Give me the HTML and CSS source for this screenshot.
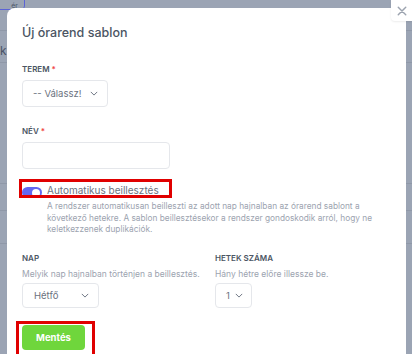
FILE: index.html
```html
<!DOCTYPE html>
<html lang="hu">
<head>
    <meta charset="UTF-8">
    <meta name="viewport" content="width=device-width, initial-scale=1.0">
    <title>Új órarend sablon</title>
    <link rel="stylesheet" href="styles.css">
</head>
<body>
    <div class="backdrop">
        <div class="page-chip">ér</div>
        <div class="page-row row-1"><span class="page-text">k</span></div>
        <div class="page-row row-2"></div>
        <div class="page-row row-3"></div>
        <div class="page-row row-4"></div>
        <div class="page-row row-5"></div>
    </div>

    <div class="modal">
        <h2 class="modal-title">Új órarend sablon</h2>

        <div class="field">
            <label class="field-label">Terem <span class="req">*</span></label>
            <div class="select select-room">
                <span>-- Válassz!</span>
                <svg class="chevron" viewBox="0 0 10 6" width="8" height="5"><path d="M1 1l4 4 4-4" fill="none" stroke="#6b7280" stroke-width="1.2"/></svg>
            </div>
        </div>

        <div class="field">
            <label class="field-label">Név <span class="req">*</span></label>
            <div class="input"></div>
        </div>

        <div class="switch-row">
            <span class="switch"><span class="knob"></span></span>
            <div class="switch-text">
                <div class="switch-label">Automatikus beillesztés</div>
                <p class="switch-help">A rendszer automatikusan beilleszti az adott nap hajnalban az órarend sablont a következő hetekre. A sablon beillesztésekor a rendszer gondoskodik arról, hogy ne keletkezzenek duplikációk.</p>
            </div>
        </div>

        <div class="columns">
            <div class="field">
                <label class="field-label">Nap</label>
                <p class="help">Melyik nap hajnalban történjen a beillesztés.</p>
                <div class="select select-day">
                    <span>Hétfő</span>
                    <svg class="chevron" viewBox="0 0 10 6" width="8" height="5"><path d="M1 1l4 4 4-4" fill="none" stroke="#6b7280" stroke-width="1.2"/></svg>
                </div>
            </div>
            <div class="field">
                <label class="field-label">Hetek száma</label>
                <p class="help">Hány hétre előre illessze be.</p>
                <div class="select select-weeks">
                    <span>1</span>
                    <svg class="chevron" viewBox="0 0 10 6" width="8" height="5"><path d="M1 1l4 4 4-4" fill="none" stroke="#6b7280" stroke-width="1.2"/></svg>
                </div>
            </div>
        </div>

        <button class="save-button" type="button">Mentés</button>

        <div class="mark mark-switch"></div>
        <div class="mark mark-save"></div>
    </div>

    <button class="close-button" type="button" aria-label="Bezárás">
        <svg viewBox="0 0 12 12" width="10" height="10"><path d="M1.5 1.5l9 9M10.5 1.5l-9 9" stroke="#9ca3af" stroke-width="1.7" stroke-linecap="round"/></svg>
    </button>
</body>
</html>
```

FILE: styles.css
```css
* {
    box-sizing: border-box;
}
body {
    margin: 0;
    height: 354px;
    overflow: hidden;
    font-family: 'Inter', 'Liberation Sans', sans-serif;
    background-color: #9ba4b4;
    position: relative;
}
.backdrop {
    padding-top: 30px;
}
.page-chip {
    position: absolute;
    top: -9px;
    left: -30px;
    width: 55px;
    height: 19px;
    border: 1px solid #5b63d6;
    border-radius: 4px;
    font-size: 7px;
    line-height: 7px;
    color: #4a5366;
    text-align: right;
    padding: 10px 6px 0 0;
}
.page-row {
    border-top: 1px solid #8f98a8;
}
.row-1 {
    height: 32px;
}
.page-text {
    display: block;
    padding: 12px 0 0 0;
    font-size: 12px;
    color: #4a5366;
}
.row-2 {
    height: 121px;
}
.row-3 {
    height: 27px;
}
.row-4 {
    height: 33px;
}
.row-5 {
    height: 80px;
}

.modal {
    position: absolute;
    top: 8px;
    left: 7px;
    width: 399px;
    height: 360px;
    background-color: #fff;
    border-radius: 8px 0 0 0;
    padding: 17px 15px;
}
.modal-title {
    margin: 0 0 23px;
    font-size: 12.5px;
    line-height: 16px;
    font-weight: 500;
    color: #4b5563;
}
.field {
    margin-bottom: 19px;
}
.field-label {
    display: block;
    font-size: 8px;
    line-height: 10px;
    font-weight: 600;
    text-transform: uppercase;
    color: #4b5563;
    margin-bottom: 6px;
}
.req {
    color: #ef4444;
}
.select {
    display: flex;
    align-items: center;
    justify-content: space-between;
    height: 27px;
    border: 1px solid #e5e7eb;
    border-radius: 4px;
    padding: 0 9px 0 10px;
    font-size: 9.5px;
    color: #6b7280;
}
.select-room {
    width: 86px;
}
.input {
    width: 148px;
    height: 27px;
    border: 1px solid #e5e7eb;
    border-radius: 4px;
}
.switch-row {
    display: flex;
    gap: 5px;
    margin-top: -5px;
}
.switch {
    flex: none;
    width: 20px;
    height: 11px;
    margin-top: 4px;
    border-radius: 6px;
    background-color: #6366f1;
    position: relative;
}
.knob {
    position: absolute;
    top: 1.5px;
    right: 2px;
    width: 8px;
    height: 8px;
    border-radius: 50%;
    background-color: #fff;
}
.switch-label {
    font-size: 10px;
    color: #6b7280;
    line-height: 14px;
}
.switch-help {
    margin: 4px 0 0;
    font-size: 8.3px;
    line-height: 11.5px;
    color: #9ca3af;
    width: 335px;
}
.columns {
    display: flex;
    margin-top: 17.5px;
}
.columns .field {
    flex: none;
    width: 193px;
    margin-bottom: 17px;
}
.help {
    margin: 0 0 3px;
    font-size: 8.5px;
    line-height: 11px;
    color: #9ca3af;
}
.columns .select {
    height: 25px;
}
.select-day {
    width: 77px;
    padding-left: 11px;
    padding-right: 9px;
}
.select-weeks {
    width: 37px;
    padding-left: 10px;
    padding-right: 8px;
}
.save-button {
    display: block;
    width: 63px;
    height: 25px;
    border: none;
    border-radius: 4px;
    background-color: #6fd63c;
    color: #fff;
    font-family: inherit;
    font-size: 9.5px;
    font-weight: 700;
}
.mark {
    position: absolute;
    border: 3px solid #e00000;
}
.mark-switch {
    top: 171px;
    left: 12px;
    width: 153px;
    height: 19px;
}
.mark-save {
    top: 313px;
    left: 9px;
    width: 79px;
    height: 40px;
}
.close-button {
    position: absolute;
    top: 0;
    right: 0;
    width: 21px;
    height: 21px;
    border: none;
    border-radius: 0 0 0 4px;
    background-color: #fff;
    padding: 0;
    display: flex;
    align-items: center;
    justify-content: center;
    box-shadow: 0 1px 2px rgba(0, 0, 0, 0.08);
}
```
